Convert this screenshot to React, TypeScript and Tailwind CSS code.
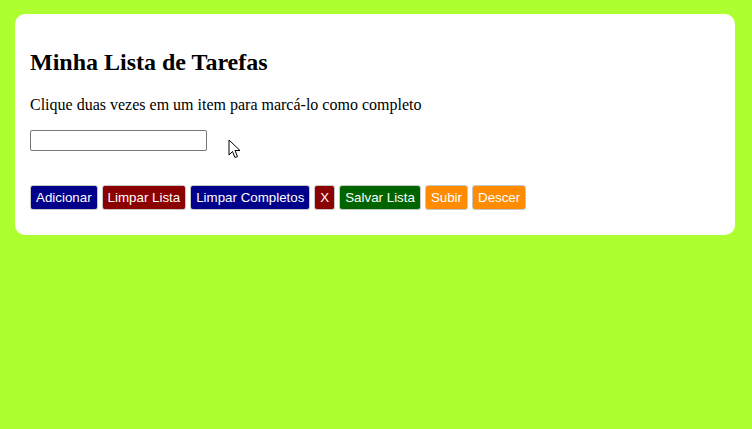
import { useState } from "react";

const buttons: { label: string; color: string }[] = [
	{ label: "Adicionar", color: "bg-[#00008b]" },
	{ label: "Limpar Lista", color: "bg-[#8b0000]" },
	{ label: "Limpar Completos", color: "bg-[#00008b]" },
	{ label: "X", color: "bg-[#8b0000]" },
	{ label: "Salvar Lista", color: "bg-[#006400]" },
	{ label: "Subir", color: "bg-[#ff8c00]" },
	{ label: "Descer", color: "bg-[#ff8c00]" },
];

function Cursor() {
	return (
		<svg
			className="pointer-events-none absolute left-[228px] top-[139px]"
			width="14"
			height="21"
			viewBox="0 0 14 21"
		>
			<path
				d="M1 1 L1 16 L4.5 12.5 L7 18.5 L9.5 17.5 L7 11.5 L12 11.5 Z"
				fill="#fff"
				stroke="#000"
				strokeWidth="1"
				strokeLinejoin="round"
			/>
		</svg>
	);
}

export default function App() {
	const [task, setTask] = useState("");

	return (
		<div className="relative min-h-[429px] bg-[#adff2f] pl-[15px] pr-[17px] pt-[14px]">
			<div className="rounded-[10px] bg-white p-[15px] pb-[25px] font-['Liberation_Serif',serif] text-black">
				<h2 className="my-[20px] text-[24px] font-bold leading-[26.6px]">
					Minha Lista de Tarefas
				</h2>
				<p className="mb-[17px] text-[16px] leading-[17.7px]">
					Clique duas vezes em um item para marcá-lo como completo
				</p>
				<input
					type="text"
					value={task}
					onChange={(e) => setTask(e.target.value)}
					className="block h-[21px] w-[177px] rounded-[2px] border border-[#767676] px-[2px] font-['Liberation_Sans',sans-serif] text-[13.33px] outline-none"
				/>
				<div className="mt-[34px] flex gap-[4px] font-['Liberation_Sans',sans-serif]">
					{buttons.map((b) => (
						<button
							key={b.label}
							className={`${b.color} h-[25px] rounded-[3px] border border-[#c8c8c8] px-[5px] text-[13.33px] leading-[15px] text-white`}
						>
							{b.label}
						</button>
					))}
				</div>
			</div>
			<Cursor />
		</div>
	);
}
